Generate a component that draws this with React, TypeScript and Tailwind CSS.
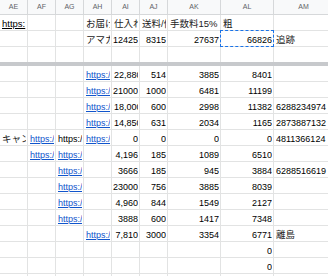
import React from 'react';

type Cell = { t: string; r?: boolean; k?: 'link' | 'ul' | 'cjk' };

const COLS = ['AE', 'AF', 'AG', 'AH', 'AI', 'AJ', 'AK', 'AL', 'AM'];
const WIDTHS = ['w-[28px]', 'w-[28px]', 'w-[28px]', 'w-[28px]', 'w-[28px]', 'w-[28px]', 'w-[53px]', 'w-[53px]', 'w-[60px]'];

const L: Cell = { t: 'https://', k: 'link' };
const E: Cell = { t: '' };
const n = (t: string): Cell => ({ t, r: true });
const s = (t: string): Cell => ({ t });
const j = (t: string): Cell => ({ t, k: 'cjk' });

// top (frozen) rows
const topRows: Cell[][] = [
  [{ t: 'https:', k: 'ul' }, E, E, j('お届け先'), j('仕入れ値'), j('送料/個'), j('手数料15%'), j('粗'), E],
  [E, E, E, j('アマカゴ'), n('12425'), n('8315'), n('27637'), n('66826'), j('追跡')],
  [E, E, E, E, E, E, E, E, E],
];

const bodyRows: Cell[][] = [
  [E, E, E, L, s('22,880'), n('514'), n('3885'), n('8401'), E],
  [E, E, E, L, n('21000'), n('1000'), n('6481'), n('11199'), E],
  [E, E, E, L, s('18,000'), n('600'), n('2998'), n('11382'), s('6288234974')],
  [E, E, E, L, s('14,850'), n('631'), n('2034'), n('1165'), s('2873887132')],
  [j('キャンセル'), L, s('https://'), L, n('0'), n('0'), n('0'), n('0'), s('4811366124')],
  [E, L, L, E, n('4,196'), n('185'), n('1089'), n('6510'), E],
  [E, E, L, E, n('3666'), n('185'), n('945'), n('3884'), s('6288516619')],
  [E, E, L, E, n('23000'), n('756'), n('3885'), n('8039'), E],
  [E, E, L, E, n('4,960'), n('844'), n('1549'), n('2127'), E],
  [E, E, L, E, n('3888'), n('600'), n('1417'), n('7348'), E],
  [E, E, E, L, n('7,810'), n('3000'), n('3354'), n('6771'), j('離島')],
  [E, E, E, E, E, E, E, n('0'), E],
  [E, E, E, E, E, E, E, n('0'), E],
  [E, E, E, E, E, E, E, E, E],
];

const GridCell: React.FC<{ cell: Cell; i: number; h: string; selected?: boolean; last?: boolean }> = ({ cell, i, h, selected, last }) => (
  <div
    className={`${WIDTHS[i]} ${h} relative shrink-0 border-r border-[#e2e3e3] ${last ? '' : 'border-b'} flex items-end pr-[1px] ${cell.r ? 'pl-[1px]' : 'pl-[2px]'}`}
  >
    <div className={`w-full overflow-hidden whitespace-nowrap leading-[12px] ${cell.r ? 'text-right' : 'text-left'}`}>
      <span
        className={`leading-[12px] ${
          cell.k === 'link'
            ? 'text-[9px] text-[#1155cc] underline'
            : cell.k === 'ul'
            ? 'text-[9.5px] text-black underline'
            : cell.k === 'cjk'
            ? 'text-[9.5px] text-[#222]'
            : 'text-[9px] text-black'
        }`}
      >
        {cell.t}
      </span>
    </div>
    {selected && <div className="absolute -left-px -top-px right-[-1px] bottom-[-1px] border border-dashed border-[#1a73e8]" />}
  </div>
);

export default function App() {
  return (
    <div
      className="w-[328px] h-[276px] overflow-hidden bg-white"
      style={{ fontFamily: '"Liberation Sans", Arial, "Noto Sans CJK JP", sans-serif' }}
    >
      {/* column header */}
      <div className="flex h-[15px] bg-[#f8f9fa] border-b border-[#d6d8da]">
        {COLS.map((c, i) => (
          <div
            key={c}
            className={`${WIDTHS[i]} shrink-0 border-r border-[#d6d8da] flex items-center justify-center text-[7px] text-[#5f6368]`}
          >
            {c}
          </div>
        ))}
      </div>

      {topRows.map((row, ri) => (
        <div key={ri} className="flex">
          {row.map((cell, ci) => (
            <GridCell
              key={ci}
              cell={cell}
              i={ci}
              h={ri === 2 ? 'h-[15px]' : 'h-[16px]'}
              last={ri === 2}
              selected={ri === 1 && ci === 7}
            />
          ))}
        </div>
      ))}

      {/* frozen rows divider */}
      <div className="h-[4px] bg-[#c7c9cc]" />

      {bodyRows.map((row, ri) => (
        <div key={ri} className="flex">
          {row.map((cell, ci) => (
            <GridCell key={ci} cell={cell} i={ci} h="h-[16px]" />
          ))}
        </div>
      ))}
    </div>
  );
}
